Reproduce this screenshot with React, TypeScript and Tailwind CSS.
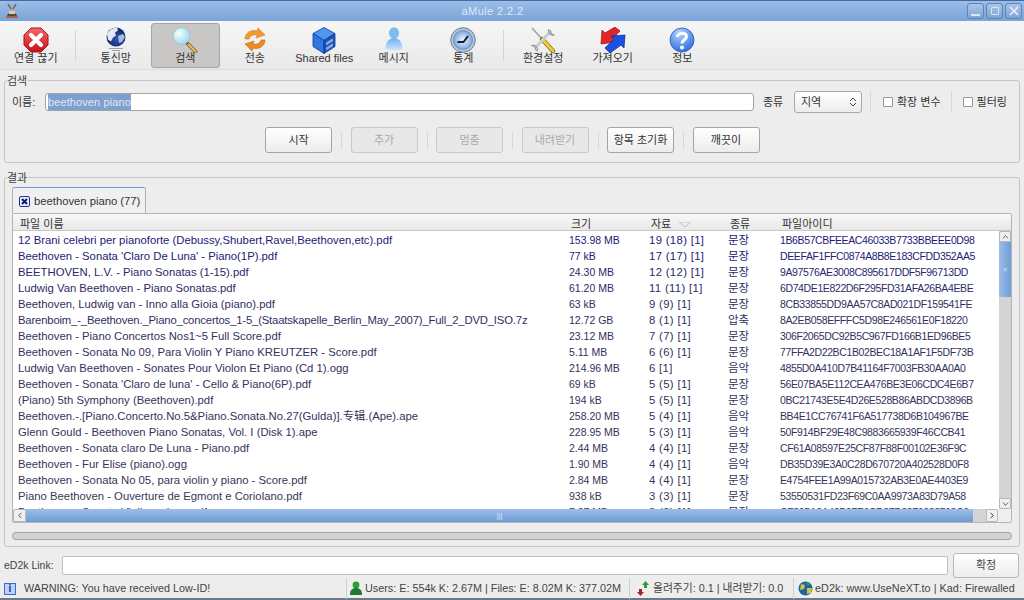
import type { ReactNode } from "react";

const FONT = "font-['Liberation_Sans','Noto_Sans_CJK_KR',sans-serif]";
const COLS = "grid-cols-[551px_80px_79px_52px_1fr]";

type Row = { name: string; size: string; src: string; type: string; hash: string; color: string; tight?: boolean };

const ROWS: Row[] = [
  { name: "12 Brani celebri per pianoforte (Debussy,Shubert,Ravel,Beethoven,etc).pdf", size: "153.98 MB", src: "19 (18) [1]", type: "문장", hash: "1B6B57CBFEEAC46033B7733BBEEE0D98", color: "text-[#1a1a78]" },
  { name: "Beethoven - Sonata 'Claro De Luna' - Piano(1P).pdf", size: "77 kB", src: "17 (17) [1]", type: "문장", hash: "DEEFAF1FFC0874A8B8E183CFDD352AA5", color: "text-[#222270]" },
  { name: "BEETHOVEN, L.V. - Piano Sonatas (1-15).pdf", size: "24.30 MB", src: "12 (12) [1]", type: "문장", hash: "9A97576AE3008C895617DDF5F96713DD", color: "text-[#28286a]" },
  { name: "Ludwig Van Beethoven - Piano Sonatas.pdf", size: "61.20 MB", src: "11 (11) [1]", type: "문장", hash: "6D74DE1E822D6F295FD31AFA26BA4EBE", color: "text-[#2c2c66]" },
  { name: "Beethoven, Ludwig van - Inno alla Gioia (piano).pdf", size: "63 kB", src: "9 (9) [1]", type: "문장", hash: "8CB33855DD9AA57C8AD021DF159541FE", color: "text-[#303060]" },
  { name: "Barenboim_-_Beethoven._Piano_concertos_1-5_(Staatskapelle_Berlin_May_2007)_Full_2_DVD_ISO.7z", size: "12.72 GB", src: "8 (1) [1]", type: "압축", hash: "8A2EB058EFFFC5D98E246561E0F18220", color: "text-[#303060]", tight: true },
  { name: "Beethoven - Piano Concertos Nos1~5 Full Score.pdf", size: "23.12 MB", src: "7 (7) [1]", type: "문장", hash: "306F2065DC92B5C967FD166B1ED96BE5", color: "text-[#32325c]" },
  { name: "Beethoven - Sonata No 09, Para Violin Y Piano KREUTZER - Score.pdf", size: "5.11 MB", src: "6 (6) [1]", type: "문장", hash: "77FFA2D22BC1B02BEC18A1AF1F5DF73B", color: "text-[#32325c]" },
  { name: "Ludwig Van Beethoven - Sonates Pour Violon Et Piano (Cd 1).ogg", size: "214.96 MB", src: "6 [1]", type: "음악", hash: "4855D0A410D7B41164F7003FB30AA0A0", color: "text-[#32325c]" },
  { name: "Beethoven - Sonata 'Claro de luna' - Cello & Piano(6P).pdf", size: "69 kB", src: "5 (5) [1]", type: "문장", hash: "56E07BA5E112CEA476BE3E06CDC4E6B7", color: "text-[#34345a]" },
  { name: "(Piano) 5th Symphony (Beethoven).pdf", size: "194 kB", src: "5 (5) [1]", type: "문장", hash: "0BC21743E5E4D26E528B86ABDCD3896B", color: "text-[#34345a]" },
  { name: "Beethoven.-.[Piano.Concerto.No.5&Piano.Sonata.No.27(Gulda)].专辑.(Ape).ape", size: "258.20 MB", src: "5 (4) [1]", type: "음악", hash: "BB4E1CC76741F6A517738D6B104967BE", color: "text-[#34345a]" },
  { name: "Glenn Gould - Beethoven Piano Sonatas, Vol. I (Disk 1).ape", size: "228.95 MB", src: "5 (3) [1]", type: "음악", hash: "50F914BF29E48C9883665939F46CCB41", color: "text-[#34345a]" },
  { name: "Beethoven - Sonata claro De Luna - Piano.pdf", size: "2.44 MB", src: "4 (4) [1]", type: "문장", hash: "CF61A08597E25CF87F88F00102E36F9C", color: "text-[#363658]" },
  { name: "Beethoven - Fur Elise (piano).ogg", size: "1.90 MB", src: "4 (4) [1]", type: "음악", hash: "DB35D39E3A0C28D670720A402528D0F8", color: "text-[#363658]" },
  { name: "Beethoven - Sonata No 05, para violin y piano - Score.pdf", size: "2.84 MB", src: "4 (4) [1]", type: "문장", hash: "E4754FEE1A99A015732AB3E0AE4403E9", color: "text-[#363658]" },
  { name: "Piano Beethoven - Ouverture de Egmont e Coriolano.pdf", size: "938 kB", src: "3 (3) [1]", type: "문장", hash: "53550531FD23F69C0AA9973A83D79A58", color: "text-[#383856]" },
  { name: "Beethoven - Sonata Violin y piano.pdf", size: "7.07 MB", src: "3 (3) [1]", type: "문장", hash: "CF395A0A40B07E6CD87D8376028768C0", color: "text-[#383856]" },
];

function IconDisconnect() {
  return (
    <svg width="26" height="26" viewBox="0 0 26 26">
      <defs>
        <linearGradient id="dr" x1="0" y1="0" x2="0" y2="1">
          <stop offset="0" stopColor="#f4686a" />
          <stop offset="1" stopColor="#c80f18" />
        </linearGradient>
      </defs>
      <path d="M8 1h10l7 7v10l-7 7H8l-7-7V8z" fill="url(#dr)" stroke="#a8161c" />
      <path d="M8 8l10 10M18 8L8 18" stroke="#fff" strokeWidth="4.2" strokeLinecap="round" />
    </svg>
  );
}

function IconGlobe() {
  return (
    <svg width="20" height="24" viewBox="0 0 20 24">
      <defs>
        <radialGradient id="gl" cx="0.55" cy="0.6" r="0.65">
          <stop offset="0" stopColor="#2a55b4" />
          <stop offset="1" stopColor="#0e1f60" />
        </radialGradient>
      </defs>
      <path d="M3 21.5h14M6 23.5h8" stroke="#9aa0ac" strokeWidth="1" />
      <circle cx="10" cy="10" r="9.5" fill="url(#gl)" />
      <path d="M1 7c2-4 6-6.500 10-6.500l1 3-3 2 1 3-3 2-2 4-3-2z" fill="#e4e9f2" />
      <path d="M12 9l5-2 2 3-3 5-3 1z" fill="#a9bcdc" />
    </svg>
  );
}

function IconSearch() {
  return (
    <svg width="26" height="26" viewBox="0 0 26 26">
      <defs>
        <radialGradient id="ln" cx="0.35" cy="0.35" r="0.75">
          <stop offset="0" stopColor="#f6feff" />
          <stop offset="1" stopColor="#8fd8ec" />
        </radialGradient>
      </defs>
      <path d="M15 16l8.500 8.500" stroke="#7c6022" strokeWidth="3.600" strokeLinecap="round" />
      <path d="M16.500 17.500l7 7" stroke="#e8c468" strokeWidth="1.800" strokeLinecap="round" />
      <circle cx="9.500" cy="9" r="8.500" fill="url(#ln)" stroke="#a9c0cc" strokeWidth="1" />
    </svg>
  );
}

function IconTransfer() {
  return (
    <svg width="24" height="25" viewBox="0 0 24 25">
      <path d="M2 12C2 6 8 2 14 4l1-3 7 7-9 3 1-3c-4-1-7 1-8 4z" fill="#f39a2c" stroke="#d87a14" strokeWidth="0.6" />
      <path d="M22 13c0 6-6 10-12 8l-1 3-7-7 9-3-1 3c4 1 7-1 8-4z" fill="#ec8a2a" stroke="#c9660f" strokeWidth="0.6" />
    </svg>
  );
}

function IconShared() {
  return (
    <svg width="24" height="27" viewBox="0 0 24 27">
      <path d="M12 .500l11 6-11 7-11-7z" fill="#4f97ee" stroke="#12389a" strokeWidth="0.8" strokeLinejoin="round" />
      <path d="M1 6.500l11 7v13l-11-7z" fill="#2f78e0" stroke="#12389a" strokeWidth="0.8" strokeLinejoin="round" />
      <path d="M23 6.500l-11 7v13l11-7z" fill="#1a50b6" stroke="#12389a" strokeWidth="0.8" strokeLinejoin="round" />
      <path d="M14 15.500l7-4.300v3l-7 4.300zM14 20.500l7-4.300v3l-7 4.300z" fill="#7fabe8" />
    </svg>
  );
}

function IconMessage() {
  return (
    <svg width="18" height="24" viewBox="0 0 18 24">
      <defs>
        <linearGradient id="ms" x1="0" y1="0" x2="0" y2="1">
          <stop offset="0" stopColor="#6db0ee" />
          <stop offset="1" stopColor="#cfe6fa" />
        </linearGradient>
      </defs>
      <ellipse cx="9" cy="6" rx="5" ry="5.800" fill="#7fbcf2" />
      <path d="M.5 22c0-6 3-11 8.500-11s8.500 5 8.500 11c-5 2-12 2-17 0z" fill="url(#ms)" />
    </svg>
  );
}

function IconStats() {
  return (
    <svg width="26" height="26" viewBox="0 0 26 26">
      <defs>
        <radialGradient id="st" cx="0.5" cy="0.5" r="0.55">
          <stop offset="0" stopColor="#f4f8fc" />
          <stop offset="1" stopColor="#6f9fe0" />
        </radialGradient>
      </defs>
      <circle cx="13" cy="13" r="12.300" fill="#b9c6d8" stroke="#6a7a96" />
      <circle cx="13" cy="13" r="9.500" fill="url(#st)" stroke="#5f7fb0" strokeWidth="0.7" />
      <path d="M7.500 15h6l4.500-6" stroke="#141e30" strokeWidth="2" fill="none" />
    </svg>
  );
}

function IconSettings() {
  return (
    <svg width="26" height="26" viewBox="0 0 26 26">
      <path d="M2 1l11 12" stroke="#a4a8ae" strokeWidth="1.800" />
      <path d="M12 12l11 12" stroke="#8c7420" strokeWidth="4.400" strokeLinecap="round" />
      <path d="M12.500 12.500l10.500 11.500" stroke="#f0d040" strokeWidth="2.600" strokeLinecap="round" />
      <path d="M21 4L5 21" stroke="#c8ccd2" strokeWidth="3" />
      <path d="M18.500 2.500a4.500 4.500 0 006 5.500l-3.500-1.500-.5-3zM7.500 24a4.500 4.500 0 00-6-5.500l3.500 1.500.5 3z" fill="#c4c8ce" stroke="#7a7e84" strokeWidth="0.7" />
    </svg>
  );
}

function IconImport() {
  return (
    <svg width="26" height="26" viewBox="0 0 26 26">
      <path d="M15 0l5 4-8 8 3 3-14 2 1-14 3 3z" fill="#e2252a" stroke="#8c1014" strokeWidth="0.7" strokeLinejoin="round" />
      <path d="M10 26l-5-5 9-9-3-3 14-1-1 13-3-3z" fill="#1c50e0" stroke="#0c2478" strokeWidth="0.7" strokeLinejoin="round" />
    </svg>
  );
}

function IconAbout() {
  return (
    <svg width="26" height="26" viewBox="0 0 26 26">
      <defs>
        <radialGradient id="ab" cx="0.4" cy="0.2" r="0.9">
          <stop offset="0" stopColor="#b4d6fa" />
          <stop offset="1" stopColor="#2060dc" />
        </radialGradient>
      </defs>
      <circle cx="13" cy="13" r="12" fill="url(#ab)" stroke="#3a6cc8" />
      <path d="M8.500 10c0-4.500 9-5 9-.5 0 3.500-4.500 3-4.500 7" stroke="#fff" strokeWidth="3" fill="none" />
      <circle cx="13" cy="20.500" r="2" fill="#fff" />
    </svg>
  );
}

function ToolItem({ icon, label, active }: { icon: ReactNode; label: string; active?: boolean }) {
  return (
    <div
      className={
        "flex h-[45px] w-[68.5px] shrink-0 flex-col items-center rounded-[3px] border pt-[3px] " +
        (active ? "border-[#a6a6a6] bg-[#c9c7c5]" : "border-transparent")
      }
    >
      <div className="flex h-[24px] items-start justify-center">{icon}</div>
      <span className="relative whitespace-nowrap text-[11px] leading-[14px] text-[#333]">{label}</span>
    </div>
  );
}

function ToolSep() {
  return <div className="mx-[5.25px] h-[30px] w-px shrink-0 bg-[#d4d4d4]" />;
}

function ToolGap() {
  return <div className="w-px shrink-0" />;
}

function GtkButton({ label, disabled }: { label: string; disabled?: boolean }) {
  return (
    <div
      className={
        "flex h-[26px] w-[67px] shrink-0 items-center justify-center whitespace-nowrap rounded-[3px] border text-[11px] " +
        (disabled
          ? "border-[#c8c8c8] bg-[#e8e8e8] text-[#aaa]"
          : "border-[#a4a4a4] bg-gradient-to-b from-white to-[#ececec] text-[#333]")
      }
    >
      {label}
    </div>
  );
}

function BtnSep() {
  return <div className="ml-[9px] mr-[8.5px] h-[17px] w-px shrink-0 bg-[#d8d8d8]" />;
}

function Group({ label, className, children }: { label: string; className: string; children: ReactNode }) {
  return (
    <div className={"relative mx-[4px] rounded-[3px] border border-[#c4c4c4] " + className}>
      <span className="absolute left-[2px] top-[-7px] bg-[#ededed] pr-px text-[11px] leading-[14px] text-[#444]">{label}</span>
      {children}
    </div>
  );
}

function Checkbox({ label }: { label: string }) {
  return (
    <div className="flex items-center gap-[4px]">
      <div className="h-[10px] w-[10px] rounded-[1px] border border-[#9a9a9a] bg-white" />
      <span className="whitespace-nowrap text-[11px] text-[#333]">{label}</span>
    </div>
  );
}

function StatusCell({ icon, children, className }: { icon?: ReactNode; children: ReactNode; className: string }) {
  return (
    <div className={"flex h-[21px] shrink-0 items-center whitespace-nowrap border-l border-[#cfcfcf] " + className}>
      {icon}
      <span>{children}</span>
    </div>
  );
}

export default function App() {
  return (
    <div className={"flex h-[600px] w-[1024px] flex-col overflow-hidden bg-[#ededed] " + FONT}>
      {/* title bar */}
      <div className="flex h-[21px] shrink-0 items-center border-t border-[#3f6ba8] bg-gradient-to-b from-[#9cbde6] to-[#7aa4d8] pl-[6px] pr-[2px]">
        <svg width="12" height="14" viewBox="0 0 12 14">
          <path d="M2 0l3 5M10 0L7 5" stroke="#7a5a3a" strokeWidth="1.4" />
          <path d="M1 12c1-5 9-5 10 0z" fill="#5a4a3a" />
          <path d="M3 7h6v3H3z" fill="#e8c8a0" />
          <path d="M0 13h12" stroke="#b04a20" strokeWidth="1.4" />
        </svg>
        <span className="flex-1 text-center text-[11px] tracking-[0.4px] text-[#dfe9f6]">aMule 2.2.2</span>
        <div className="flex gap-[2px]">
          {["min", "max", "close"].map((b) => (
            <div key={b} className="flex h-[16px] w-[17px] items-center justify-center rounded-[3px] border border-[#5e83b4] bg-gradient-to-b from-[#a9c6ea] to-[#7ea5d6]">
              {b === "min" && <div className="mt-[8px] h-[2px] w-[9px] bg-[#dbe6f4]" />}
              {b === "max" && <div className="h-[8px] w-[8px] rounded-[1px] border border-[#dbe6f4]" />}
              {b === "close" && (
                <svg width="10" height="10" viewBox="0 0 10 10">
                  <path d="M1 1l8 8M9 1l-8 8" stroke="#e6eef8" strokeWidth="1.6" />
                </svg>
              )}
            </div>
          ))}
        </div>
      </div>

      {/* toolbar */}
      <div className="flex h-[49px] shrink-0 items-center border-b border-[#dcdcdc] bg-gradient-to-b from-[#f6f6f6] to-[#e9e9e9] pl-[1.5px]">
        <ToolItem icon={<IconDisconnect />} label="연결 끊기" />
        <ToolSep />
        <ToolItem icon={<IconGlobe />} label="통신망" />
        <ToolGap />
        <ToolItem icon={<IconSearch />} label="검색" active />
        <ToolGap />
        <ToolItem icon={<IconTransfer />} label="전송" />
        <ToolGap />
        <ToolItem icon={<IconShared />} label="Shared files" />
        <ToolGap />
        <ToolItem icon={<IconMessage />} label="메시지" />
        <ToolGap />
        <ToolItem icon={<IconStats />} label="통계" />
        <ToolSep />
        <ToolItem icon={<IconSettings />} label="환경설정" />
        <ToolGap />
        <ToolItem icon={<IconImport />} label="가져오기" />
        <ToolGap />
        <ToolItem icon={<IconAbout />} label="정보" />
      </div>

      {/* search group */}
      <Group label="검색" className="mt-[10px] h-[83px] shrink-0">
        <div className="mt-[11px] flex h-[20px] items-center pl-[7px]">
          <span className="w-[33px] shrink-0 text-[11px] text-[#333]">이름:</span>
          <div className="flex h-[18px] w-[709px] shrink-0 items-center rounded-[3px] border border-[#a2a2a2] bg-white pl-[2px] text-[11px]">
            <span className="bg-[#7f9fcf] tracking-[0.1px] text-[#dfe8f4]">beethoven piano</span>
          </div>
          <span className="ml-[9px] w-[31px] shrink-0 text-[11px] text-[#333]">종류</span>
          <div className="flex h-[22px] w-[68px] shrink-0 items-center justify-between rounded-[3px] border border-[#a8a8a8] bg-gradient-to-b from-white to-[#ececec] pl-[6px] pr-[4px] text-[11px] text-[#333]">
            <span>지역</span>
            <svg width="8" height="12" viewBox="0 0 8 12">
              <path d="M1 5l3-3 3 3M1 7l3 3 3-3" stroke="#444" strokeWidth="1" fill="none" />
            </svg>
          </div>
          <div className="ml-[8px] mr-[12px] h-[22px] w-px shrink-0 bg-[#d8d8d8]" />
          <Checkbox label="확장 변수" />
          <div className="ml-[10px] mr-[11px] h-[22px] w-px shrink-0 bg-[#d8d8d8]" />
          <Checkbox label="필터링" />
        </div>
        <div className="mt-[15px] flex items-center pl-[260px]">
          <GtkButton label="시작" />
          <BtnSep />
          <GtkButton label="추가" disabled />
          <BtnSep />
          <GtkButton label="멈춤" disabled />
          <BtnSep />
          <GtkButton label="내려받기" disabled />
          <BtnSep />
          <GtkButton label="항목 초기화" />
          <BtnSep />
          <GtkButton label="깨끗이" />
        </div>
      </Group>

      {/* results group */}
      <Group label="결과" className="mt-[14px] flex h-[370px] shrink-0 flex-col px-[7px] pt-[9px]">
        <div className="flex h-[26px] shrink-0">
          <div className="flex h-[26px] w-[134px] items-center gap-[4px] rounded-t-[3px] border border-b-0 border-[#a8b4c4] border-t-[#6f9bd2] bg-[#f0f0f0] pl-[6px] pt-px text-[11.25px] text-[#333]">
            <svg width="11" height="11" viewBox="0 0 11 11">
              <rect x="0.5" y="0.5" width="10" height="10" rx="1.5" fill="#e8eefa" stroke="#20309c" />
              <path d="M3 3l5 5M8 3L3 8" stroke="#101c6c" strokeWidth="2" />
            </svg>
            beethoven piano (77)
          </div>
        </div>

        <div className="flex h-[310px] shrink-0 flex-col rounded-[2px] border border-[#b4b4b4] bg-[#eeeeee]">
          {/* list header */}
          <div className={"grid h-[17px] shrink-0 items-center border-b border-[#c8c8c8] bg-gradient-to-b from-[#f8f8f8] to-[#e8e8e8] pl-[6px] pr-[12px] pt-[2px] text-[11px] text-[#333] " + COLS}>
            <span className="pl-px">파일 이름</span>
            <span className="pl-px">크기</span>
            <span className="flex items-center gap-[8px] pl-px">
              자료
              <svg width="12" height="5" viewBox="0 0 12 5">
                <path d="M0 0h12L6 5z" fill="none" stroke="#c0c0c0" />
              </svg>
            </span>
            <span className="pl-px">종류</span>
            <span className="pl-px">파일아이디</span>
          </div>
          <div className="flex h-[278px] shrink-0">
            <div className="h-full min-w-0 flex-1 overflow-hidden bg-white pl-[5px] pt-px">
              {ROWS.map((r) => (
                <div key={r.hash} className={"grid h-[16px] items-center whitespace-nowrap text-[11.3px] leading-[16px] " + COLS + " " + r.color}>
                  <span className={r.tight ? "tracking-[-0.17px]" : ""}>{r.name}</span>
                  <span className="text-[10.5px]">{r.size}</span>
                  <span className="tracking-[0.35px]">{r.src}</span>
                  <span className="text-[11.5px]">{r.type}</span>
                  <span className="text-[10.5px] tracking-[-0.38px]">{r.hash}</span>
                </div>
              ))}
            </div>
            {/* vertical scrollbar */}
            <div className="flex w-[12px] shrink-0 flex-col bg-[#d4d4d4]">
              <div className="flex h-[11px] items-center justify-center rounded-t-[2px] border border-[#b8b8b8] bg-[#f0f0f0]">
                <svg width="7" height="4" viewBox="0 0 7 4"><path d="M1 3.500l2.500-3 2.500 3" fill="none" stroke="#666" /></svg>
              </div>
              <div className="flex h-[55px] items-center justify-center bg-gradient-to-r from-[#9dbee8] to-[#6e9cd6] text-[7px] leading-none text-[#dce8f6]">≡</div>
              <div className="flex-1" />
              <div className="flex h-[11px] items-center justify-center rounded-b-[2px] border border-[#b8b8b8] bg-[#f0f0f0]">
                <svg width="7" height="4" viewBox="0 0 7 4"><path d="M1 .500l2.500 3 2.500-3" fill="none" stroke="#666" /></svg>
              </div>
            </div>
          </div>
          {/* horizontal scrollbar */}
          <div className="flex h-[13px] shrink-0 items-stretch pr-[13px]">
            <div className="flex w-[13px] shrink-0 items-center justify-center rounded-l-[2px] border border-[#b8b8b8] bg-[#f0f0f0]">
              <svg width="4" height="7" viewBox="0 0 4 7"><path d="M3.500 1L.5 3.500l3 2.500" fill="none" stroke="#666" /></svg>
            </div>
            <div className="flex w-[947px] shrink-0 items-center justify-center bg-gradient-to-b from-[#9dbee8] to-[#6e9cd6] text-[8px] leading-none text-[#dce8f6]">|||</div>
            <div className="flex-1 bg-[#d4d4d4]" />
            <div className="flex w-[12px] shrink-0 items-center justify-center rounded-r-[2px] border border-[#b8b8b8] bg-[#f0f0f0]">
              <svg width="4" height="7" viewBox="0 0 4 7"><path d="M.5 1l3 2.500-3 2.500" fill="none" stroke="#444" /></svg>
            </div>
          </div>
        </div>

        {/* gauge */}
        <div className="mt-[9px] h-[8px] shrink-0 rounded-[4px] border border-[#a4a4a4] bg-[#d2d2d2]" />
      </Group>

      {/* ed2k link */}
      <div className="mt-[5px] flex h-[26px] shrink-0 items-center pl-[4px] pr-[5px]">
        <span className="w-[58px] shrink-0 pt-[2px] text-[10.5px] text-[#444]">eD2k Link:</span>
        <div className="h-[19px] w-[886px] shrink-0 rounded-[2px] border border-[#c0c0c0] bg-white" />
        <div className="ml-[5px] flex h-[25px] flex-1 items-center justify-center rounded-[3px] border border-[#b8b8b8] bg-gradient-to-b from-white to-[#ececec] text-[11px] text-[#444]">확정</div>
      </div>

      {/* status bar */}
      <div className="flex h-[22px] shrink-0 items-center border-b-2 border-[#6a7a88] pl-[4px] pt-px text-[10.8px] text-[#444]">
        <div className="flex w-[342px] shrink-0 items-center gap-[8px]">
          <div className="flex h-[12px] w-[12px] items-center justify-center border border-[#3a6ad8] bg-[#bcd4f8] text-[10px] font-bold leading-none text-[#1030a0]">i</div>
          <span>WARNING: You have received Low-ID!</span>
        </div>
        <StatusCell
          className="w-[283px] gap-[3px] pl-[2px]"
          icon={
            <svg width="13" height="15" viewBox="0 0 13 15">
              <circle cx="7" cy="4" r="3.400" fill="#2e9a3e" />
              <path d="M1 14c0-5 2-7 6-7s6 2 6 7z" fill="#1f7a30" />
            </svg>
          }
        >
          Users: E: 554k K: 2.67M | Files: E: 8.02M K: 377.02M
        </StatusCell>
        <StatusCell
          className="w-[164px] gap-[4px] pl-[6px]"
          icon={
            <svg width="13" height="15" viewBox="0 0 13 15">
              <path d="M8 7V4H6l3.500-4L13 4h-2v3z" fill="#2e9a3e" />
              <path d="M3 8v3H1l3.500 4L8 11H6V8z" fill="#b02020" />
            </svg>
          }
        >
          올려주기: 0.1 | 내려받기: 0.0
        </StatusCell>
        <StatusCell
          className="flex-1 gap-[2px] pl-[4px] tracking-[0.05px]"
          icon={
            <svg width="15" height="15" viewBox="0 0 15 15">
              <circle cx="7.500" cy="7.500" r="7" fill="#1c64b0" />
              <path d="M3 3l4 1-1 4-4 1zM9 7l5 0-1 5-4 1z" fill="#d8c830" />
              <path d="M8 1l4 2-2 2z" fill="#2ea040" />
            </svg>
          }
        >
          eD2k: www.UseNeXT.to | Kad: Firewalled
        </StatusCell>
      </div>
    </div>
  );
}
